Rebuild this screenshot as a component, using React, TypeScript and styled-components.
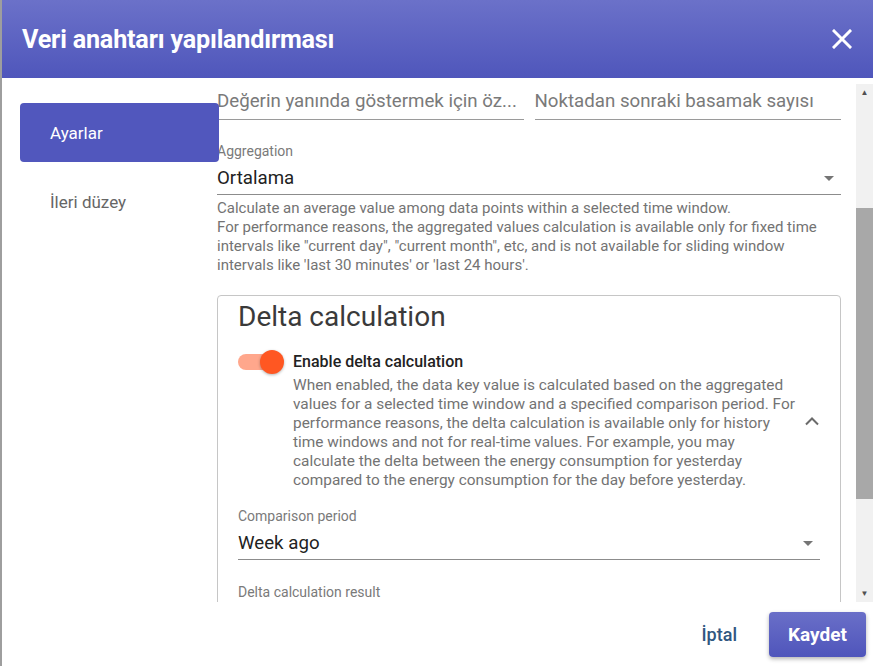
import styled, { createGlobalStyle } from 'styled-components';

const GlobalStyle = createGlobalStyle`
  html, body {
    margin: 0;
    padding: 0;
    background: #9e9e9e;
    font-family: Roboto, "Liberation Sans", sans-serif;
  }
  * { box-sizing: border-box; }
`;

const CloseIcon = () => (
  <svg width="20" height="20" viewBox="0 0 20 20">
    <path d="M2 2 L18 18 M18 2 L2 18" stroke="#fff" strokeWidth="3" strokeLinecap="square" />
  </svg>
);

const ChevronUp = () => (
  <svg width="16" height="10" viewBox="0 0 16 10">
    <path d="M2 8.5 L8 2.5 L14 8.5" stroke="#6b6b6b" strokeWidth="2" fill="none" />
  </svg>
);

const App = () => {
  return (
    <>
      <GlobalStyle />
      <Page>
        <Dialog>
          <Header>
            <Title>Veri anahtarı yapılandırması</Title>
            <CloseButton>
              <CloseIcon />
            </CloseButton>
          </Header>
          <Body>
            <Nav>
              <NavItem active>Ayarlar</NavItem>
              <NavItem>İleri düzey</NavItem>
            </Nav>
            <Main>
              <Scroller>
                <Content>
                  <FieldRow>
                    <InputField>
                      <Placeholder>Değerin yanında göstermek için öz...</Placeholder>
                    </InputField>
                    <InputField>
                      <Placeholder>Noktadan sonraki basamak sayısı</Placeholder>
                    </InputField>
                  </FieldRow>

                  <SelectBlock top={23}>
                    <FieldLabel>Aggregation</FieldLabel>
                    <SelectField>
                      <SelectValue>Ortalama</SelectValue>
                      <Caret />
                    </SelectField>
                  </SelectBlock>
                  <Hint>
                    Calculate an average value among data points within a selected time window.
                    <br />
                    For performance reasons, the aggregated values calculation is available only for fixed time
                    intervals like "current day", "current month", etc, and is not available for sliding window
                    intervals like 'last 30 minutes' or 'last 24 hours'.
                  </Hint>

                  <Panel>
                    <PanelTitle>Delta calculation</PanelTitle>
                    <ToggleRow>
                      <ToggleText>
                        <ToggleHead>
                          <Switch>
                            <SwitchTrack />
                            <SwitchThumb />
                          </Switch>
                          <ToggleLabel>Enable delta calculation</ToggleLabel>
                        </ToggleHead>
                        <ToggleHint>
                          When enabled, the data key value is calculated based on the aggregated values for a
                          selected time window and a specified comparison period. For performance reasons, the
                          delta calculation is available only for history time windows and not for real-time
                          values. For example, you may calculate the delta between the energy consumption for
                          yesterday compared to the energy consumption for the day before yesterday.
                        </ToggleHint>
                      </ToggleText>
                      <Expand>
                        <ChevronUp />
                      </Expand>
                    </ToggleRow>

                    <SelectBlock top={18}>
                      <FieldLabel>Comparison period</FieldLabel>
                      <SelectField>
                        <SelectValue>Week ago</SelectValue>
                        <Caret />
                      </SelectField>
                    </SelectBlock>
                    <SelectBlock top={24}>
                      <FieldLabel>Delta calculation result</FieldLabel>
                    </SelectBlock>
                  </Panel>
                </Content>
              </Scroller>
              <Scrollbar>
                <ScrollArrow>▲</ScrollArrow>
                <ScrollTrack>
                  <ScrollThumb />
                </ScrollTrack>
                <ScrollArrow>▼</ScrollArrow>
              </Scrollbar>
            </Main>
          </Body>
          <Footer>
            <TextButton>İptal</TextButton>
            <PrimaryButton>Kaydet</PrimaryButton>
          </Footer>
        </Dialog>
      </Page>
    </>
  );
};

export default App;

const Page = styled.div`
  width: 873px;
  height: 666px;
  display: flex;
  overflow: hidden;
  padding-left: 2px;
`;

const Dialog = styled.div`
  flex: 1;
  display: flex;
  flex-direction: column;
  background: #fff;
`;

const Header = styled.div`
  height: 78px;
  flex-shrink: 0;
  display: flex;
  align-items: center;
  justify-content: space-between;
  padding: 0 21px 0 20px;
  background: linear-gradient(180deg, #6b71c9 0%, #4f56bb 100%);
`;

const Title = styled.h2`
  margin: 0;
  color: #fff;
  font-size: 25.2px;
  font-weight: 700;
  letter-spacing: -0.2px;
`;

const CloseButton = styled.div`
  display: flex;
  align-items: center;
  justify-content: center;
  width: 20px;
  height: 20px;
`;

const Body = styled.div`
  flex: 1;
  display: flex;
  min-height: 0;
`;

const Nav = styled.div`
  width: 215px;
  flex-shrink: 0;
  padding: 25px 0 0 18px;
  display: flex;
  flex-direction: column;
  gap: 10px;
`;

const NavItem = styled.div<{ active?: boolean }>`
  width: 199px;
  height: 59px;
  display: flex;
  align-items: center;
  padding-left: 30px;
  border-radius: 4px;
  font-size: 17px;
  color: ${p => (p.active ? '#fff' : '#666')};
  background: ${p => (p.active ? '#5157bd' : 'transparent')};
  position: relative;
  z-index: 1;
`;

const Main = styled.div`
  flex: 1;
  display: flex;
  gap: 15px;
  padding-top: 6px;
  min-width: 0;
`;

const Scroller = styled.div`
  width: 624px;
  height: 518px;
  overflow: hidden;
`;

const Content = styled.div`
  display: flex;
  flex-direction: column;
`;

const FieldRow = styled.div`
  display: flex;
  gap: 11px;
`;

const InputField = styled.div`
  flex: 1;
  height: 36px;
  padding-top: 5px;
  border-bottom: 1px solid #9a9a9a;
  min-width: 0;
`;

const Placeholder = styled.div`
  font-size: 18.7px;
  line-height: 24px;
  color: #7a7a7a;
  white-space: nowrap;
  overflow: hidden;
`;

const SelectBlock = styled.div<{ top: number }>`
  margin-top: ${p => p.top}px;
  display: flex;
  flex-direction: column;
`;

const FieldLabel = styled.div`
  font-size: 14px;
  line-height: 16px;
  color: #7a7a7a;
`;

const SelectField = styled.div`
  margin-top: 7px;
  display: flex;
  align-items: center;
  justify-content: space-between;
  padding: 0 7px 4px 0;
  border-bottom: 1px solid #8c8c8c;
`;

const SelectValue = styled.div`
  font-size: 18.7px;
  line-height: 24px;
  color: #222;
`;

const Caret = styled.span`
  width: 0;
  height: 0;
  border-left: 5px solid transparent;
  border-right: 5px solid transparent;
  border-top: 5px solid #757575;
`;

const Hint = styled.div`
  margin-top: 4px;
  font-size: 15px;
  line-height: 19px;
  color: #737373;
`;

const Panel = styled.div`
  margin-top: 20px;
  border: 1px solid #c6c6c6;
  border-radius: 4px;
  padding: 5px 20px 60px;
`;

const PanelTitle = styled.div`
  font-size: 28px;
  line-height: 32px;
  color: #3a3a3a;
`;

const ToggleRow = styled.div`
  margin-top: 19px;
  display: flex;
  align-items: center;
`;

const ToggleText = styled.div`
  flex: 1;
  display: flex;
  flex-direction: column;
`;

const ToggleHead = styled.div`
  display: flex;
  align-items: center;
  gap: 9px;
  height: 20px;
`;

const Switch = styled.div`
  position: relative;
  width: 46px;
  height: 24px;
  flex-shrink: 0;
`;

const SwitchTrack = styled.div`
  position: absolute;
  left: 0;
  top: 4px;
  width: 42px;
  height: 16px;
  border-radius: 8px;
  background: #ffa78c;
`;

const SwitchThumb = styled.div`
  position: absolute;
  right: 0;
  top: 0;
  width: 24px;
  height: 24px;
  border-radius: 50%;
  background: #ff5722;
  box-shadow: 0 1px 3px rgba(0, 0, 0, 0.3);
`;

const ToggleLabel = styled.div`
  font-size: 16px;
  font-weight: 500;
  line-height: 20px;
  color: #222;
`;

const ToggleHint = styled.div`
  margin: 4px 0 0 55px;
  max-width: 506px;
  font-size: 15.4px;
  line-height: 19px;
  color: #737373;
`;

const Expand = styled.div`
  width: 22px;
  flex-shrink: 0;
  display: flex;
  justify-content: flex-end;
`;

const Scrollbar = styled.div`
  width: 17px;
  height: 518px;
  display: flex;
  flex-direction: column;
  background: #f1f1f1;
`;

const ScrollArrow = styled.div`
  height: 17px;
  display: flex;
  align-items: center;
  justify-content: center;
  font-size: 8px;
  color: #505050;
`;

const ScrollTrack = styled.div`
  flex: 1;
  padding-top: 107px;
`;

const ScrollThumb = styled.div`
  height: 291px;
  background: #a8a8a8;
`;

const Footer = styled.div`
  height: 64px;
  flex-shrink: 0;
  display: flex;
  align-items: center;
  justify-content: flex-end;
  gap: 16px;
  padding: 0 7px 0 0;
`;

const TextButton = styled.div`
  padding: 0 16px;
  font-size: 18px;
  font-weight: 500;
  color: #305680;
`;

const PrimaryButton = styled.div`
  width: 97px;
  height: 45px;
  display: flex;
  align-items: center;
  justify-content: center;
  border-radius: 4px;
  font-size: 19px;
  font-weight: 700;
  color: #fff;
  background: linear-gradient(180deg, #6a6fc8 0%, #4f55bb 100%);
  box-shadow: 0 2px 4px rgba(0, 0, 0, 0.3);
`;
